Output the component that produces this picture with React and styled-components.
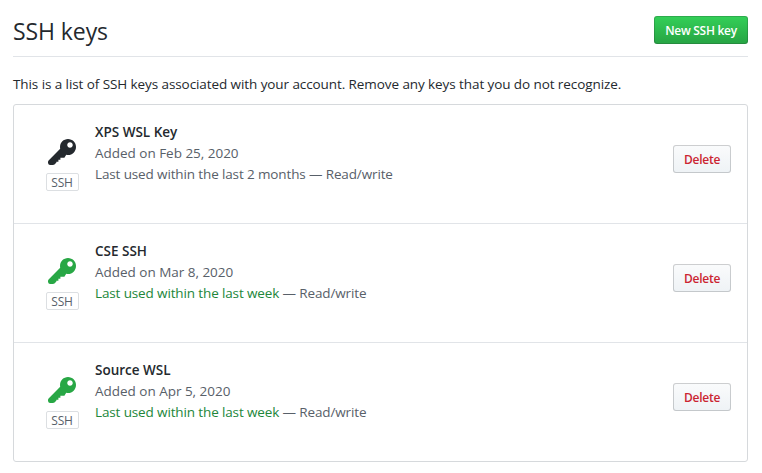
import React from "react";
import styled, { createGlobalStyle } from "styled-components";

const GlobalStyle = createGlobalStyle`
  * { box-sizing: border-box; }
  body {
    margin: 0;
    background: #fff;
    color: #24292e;
    font: 14px/21px "Open Sans", "Noto Sans", sans-serif;
  }
`;

const Page = styled.main`
  width: 735px;
  margin-left: 13px;
  padding-top: 16px;
`;

const Header = styled.header`
  display: flex;
  justify-content: space-between;
  align-items: flex-start;
  height: 41px;
  border-bottom: 1px solid #e1e4e8;
`;

const Title = styled.h2`
  margin: 0;
  font-size: 23px;
  font-weight: 400;
  line-height: 30px;
  letter-spacing: -0.08px;
`;

const Button = styled.button`
  height: 28px;
  padding: 2px 0 0;
  border: 1px solid rgba(27, 31, 35, 0.2);
  border-radius: 3px;
  font: 600 12px/20px "Open Sans", "Noto Sans", sans-serif;
  white-space: nowrap;
`;

const PrimaryButton = styled(Button)`
  width: 94px;
  color: #fff;
  background: linear-gradient(-180deg, #34d058 0%, #28a745 90%) -1px -1px / 110% 110%;
  letter-spacing: -0.28px;
`;

const DangerButton = styled(Button)`
  width: 58px;
  color: #cb2431;
  background: linear-gradient(-180deg, #fafbfc 0%, #eff3f6 90%) -1px -1px / 110% 110%;
  font-weight: 550;
  letter-spacing: -0.25px;
`;

const Intro = styled.p`
  margin: 17px 0 9px;
  height: 21px;
  font-size: 13.5px;
  letter-spacing: -0.085px;
  white-space: nowrap;
`;

const KeyList = styled.ul`
  margin: 0;
  padding: 0;
  list-style: none;
  border: 1px solid #d6d9dc;
  border-radius: 3px;
`;

const KeyRow = styled.li`
  display: flex;
  height: ${(p) => (p.$first ? "118px" : "119px")};
  padding: 16px 16px 0 32px;
  border-top: ${(p) => (p.$first ? "0" : "1px solid #e1e4e8")};
`;

const KeyKind = styled.div`
  display: flex;
  flex-direction: column;
  align-items: flex-start;
  width: 33px;
  padding-top: 16px;
  color: ${(p) => (p.$recent ? "#28a745" : "#24292e")};
`;

const KeyIcon = styled.svg`
  display: block;
  width: 28px;
  height: 32px;
  margin-left: 2px;
  fill: currentColor;
`;

const KindLabel = styled.span`
  width: 33px;
  height: 18px;
  margin-top: 4px;
  padding-right: 1px;
  border: 1px solid #dcdfe2;
  border-radius: 2px;
  color: #586069;
  font-size: 12px;
  line-height: 17px;
  letter-spacing: -0.2px;
  text-align: center;
`;

const Details = styled.div`
  flex: 1;
  margin-left: 16px;
  padding-top: 1px;
  color: #586069;
  font-size: 13.5px;
  letter-spacing: -0.13px;
`;

const Name = styled.strong`
  display: block;
  color: #24292e;
  font-size: 13.5px;
  font-weight: 600;
  letter-spacing: 0;
`;

const Line = styled.span`
  display: block;
  white-space: nowrap;
`;

const Added = styled(Line)`
  letter-spacing: -0.02px;
`;

const Usage = styled.span`
  color: ${(p) => (p.$recent ? "#22863a" : "inherit")};
`;

const Action = styled.div`
  padding-top: 24px;
`;

const keys = [
  { name: "XPS WSL Key", added: "Feb 25, 2020", used: "2 months", recent: false },
  { name: "CSE SSH", added: "Mar 8, 2020", used: "week", recent: true },
  { name: "Source WSL", added: "Apr 5, 2020", used: "week", recent: true },
];

export default function App() {
  return (
    <>
      <GlobalStyle />
      <Page>
        <Header>
          <Title>SSH keys</Title>
          <PrimaryButton>New SSH key</PrimaryButton>
        </Header>
        <Intro>
          This is a list of SSH keys associated with your account. Remove any keys that you do not recognize.
        </Intro>
        <KeyList>
          {keys.map((k, i) => (
            <KeyRow key={k.name} $first={i === 0}>
              <KeyKind $recent={k.recent}>
                <KeyIcon viewBox="0 0 14 16" aria-hidden="true">
                  <path
                    fillRule="evenodd"
                    d="M12.83 2.17C12.08 1.42 11.14 1.03 10 1c-1.13.03-2.08.42-2.83 1.17S6.04 3.86 6.01 5c0 .3.03.59.09.89L.3 11.7Q0 12 0 12.5v.5q.2 1 1 1h1.4q.6 0 1-.4l.8-.8v-.4h1v-1h1v-1h2l.9-1.51c.3.08.59.11.9.11 1.14-.03 2.08-.42 2.83-1.17S13.97 6.14 14 5c-.03-1.14-.42-2.08-1.17-2.83zM11 5.38c-.77 0-1.38-.61-1.38-1.38 0-.77.61-1.38 1.38-1.38.77 0 1.38.61 1.38 1.38 0 .77-.61 1.38-1.38 1.38z"
                  />
                </KeyIcon>
                <KindLabel>SSH</KindLabel>
              </KeyKind>
              <Details>
                <Name>{k.name}</Name>
                <Added>Added on {k.added}</Added>
                <Line>
                  <Usage $recent={k.recent}>Last used within the last {k.used}</Usage> — Read/write
                </Line>
              </Details>
              <Action>
                <DangerButton>Delete</DangerButton>
              </Action>
            </KeyRow>
          ))}
        </KeyList>
      </Page>
    </>
  );
}
